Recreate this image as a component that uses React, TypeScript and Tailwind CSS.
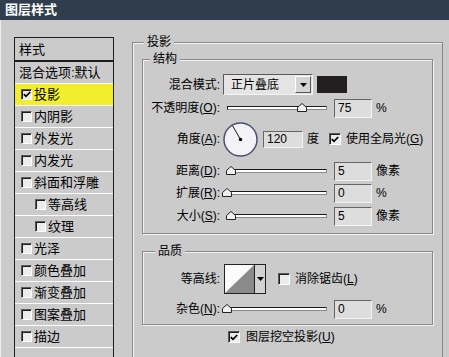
import React from "react";

const styleItems = [
  { label: "投影", checked: true, active: true },
  { label: "内阴影" },
  { label: "外发光" },
  { label: "内发光" },
  { label: "斜面和浮雕" },
  { label: "等高线", indent: true },
  { label: "纹理", indent: true },
  { label: "光泽" },
  { label: "颜色叠加" },
  { label: "渐变叠加" },
  { label: "图案叠加" },
  { label: "描边" },
];

function CheckBox({ checked = false, big = false }: { checked?: boolean; big?: boolean }) {
  return (
    <span
      className={`${big ? "w-[12px] h-[12px]" : "w-[11px] h-[11px]"} shrink-0 flex items-center justify-center border border-t-[#5a5a5a] border-l-[#5a5a5a] border-b-white border-r-white bg-[#ececec] shadow-[inset_1px_1px_0_#1e1e1e]`}
    >
      {checked && (
        <svg width="8" height="7" viewBox="0 0 8 7">
          <path d="M0.8 3.2 L3 5.4 L7.2 1" fill="none" stroke="#000" strokeWidth="1.7" />
        </svg>
      )}
    </span>
  );
}

function Field({ value, wide = false, tall = true }: { value: string; wide?: boolean; tall?: boolean }) {
  return (
    <span
      className={`${wide ? "w-[40px]" : "w-[38px]"} ${tall ? "h-[19px]" : "h-[17px]"} shrink-0 flex items-center pl-[3px] border border-t-[#666] border-l-[#666] border-b-[#f4f4f4] border-r-[#f4f4f4] bg-[#dddddd] text-[12px] leading-none`}
    >
      {value}
    </span>
  );
}

function Slider({ pos }: { pos: number }) {
  return (
    <span className="relative ml-[7px] w-[100px] h-[20px] shrink-0 flex items-center">
      <span className="w-full h-[4px] border border-t-[#1c1c1c] border-l-[#1c1c1c] border-b-[#8a8a8a] border-r-[#8a8a8a] bg-white" />
      {/* slider thumb */}
      <svg className="absolute top-[5px]" style={{ left: pos - 5 }} width="10" height="9" viewBox="0 0 10 9">
        <path d="M0.5 8.5 V4.5 L5 0.5 L9.5 4.5 V8.5 Z" fill="#f0f0f0" stroke="#222" />
      </svg>
    </span>
  );
}

function Label({ children }: { children: React.ReactNode }) {
  return <span className="w-[77px] shrink-0 text-right leading-none whitespace-nowrap">{children}</span>;
}

function SliderRow({
  label,
  pos,
  value,
  unit,
  className,
}: {
  label: React.ReactNode;
  pos: number;
  value: string;
  unit: string;
  className: string;
}) {
  return (
    <div className={`flex items-center h-[20px] ${className}`}>
      <Label>{label}</Label>
      <Slider pos={pos} />
      <span className="ml-[7px]">
        <Field value={value} />
      </span>
      <span className="ml-[4px] leading-none">{unit}</span>
    </div>
  );
}

function Legend({ children, indent }: { children: React.ReactNode; indent: string }) {
  return (
    <div className={`-mt-[9px] ${indent} w-fit px-[3px] h-[17px] leading-[17px] bg-[#cbcbcb]`}>{children}</div>
  );
}

export default function App() {
  return (
    <div className="w-[449px] h-[357px] overflow-hidden bg-[#cbcbcb] flex flex-col text-[12px] text-black font-['Liberation_Sans','Noto_Sans_CJK_SC',sans-serif]">
      {/* Title bar */}
      <div className="h-[20px] shrink-0 bg-[#2f3d4c] text-white font-bold text-[13px] pl-[5px] flex items-center">
        图层样式
      </div>

      <div className="flex flex-1 min-h-0 border-l border-[#efefef]">
        {/* Style list */}
        <div className="ml-[13px] mt-[17px] w-[100px] h-[330px] shrink-0 border border-[#1e1e1e] text-[13px]">
          <div className="h-[24px] border-b-2 border-[#1e1e1e] flex items-center pl-[4px] leading-none">样式</div>
          <div className="h-[22px] border-b border-white flex items-center pl-[4px] leading-none">混合选项:默认</div>
          {styleItems.map((it) => (
            <div
              key={it.label}
              className={`h-[22px] border-b border-white flex items-center leading-none ${it.indent ? "pl-[20px]" : "pl-[6px]"} ${it.active ? "bg-[#f2ee2c]" : ""}`}
            >
              <CheckBox checked={it.checked} />
              <span className="ml-[2px]">{it.label}</span>
            </div>
          ))}
        </div>

        {/* Drop shadow group */}
        <div className="ml-[18px] mt-[22px] w-[311px] h-[330px] shrink-0 border border-[#888] px-[9px] shadow-[inset_1px_1px_0_#f2f2f2]">
          <Legend indent="ml-[2px]">投影</Legend>

          {/* 结构 */}
          <div className="mt-[8px] border border-[#888] pb-[7px] shadow-[inset_1px_1px_0_#f2f2f2,1px_1px_0_#f2f2f2]">
            <Legend indent="ml-[7px]">结构</Legend>

            <div className="mt-[6px] h-[21px] flex items-center">
              <Label>混合模式:</Label>
              <span className="ml-[3px] w-[90px] h-[21px] shrink-0 flex items-center justify-between border border-t-[#5a5a5a] border-l-[#5a5a5a] border-b-[#f4f4f4] border-r-[#f4f4f4] bg-[#e4e4e4]">
                <span className="pl-[7px] leading-none">正片叠底</span>
                <span className="w-[16px] h-[17px] mr-[1px] flex items-center justify-center bg-[#d4d4d4] border border-t-white border-l-white border-b-[#555] border-r-[#555]">
                  <svg width="7" height="4" viewBox="0 0 7 4">
                    <path d="M0 0 H7 L3.5 4 Z" fill="#000" />
                  </svg>
                </span>
              </span>
              <span className="ml-[4px] w-[30px] h-[17px] shrink-0 bg-[#231f20]" />
            </div>

            <SliderRow
              className="mt-[3px]"
              label={
                <>
                  不透明度(<u>O</u>):
                </>
              }
              pos={75}
              value="75"
              unit="%"
            />

            <div className="mt-[3px] h-[36px] flex items-center">
              <Label>
                角度(<u>A</u>):
              </Label>
              {/* angle dial */}
              <svg className="ml-[3px] shrink-0" width="35" height="35" viewBox="0 0 35 35">
                <circle cx="17.5" cy="17.5" r="16.5" fill="#f3f3f7" stroke="#4a5270" strokeWidth="1.5" />
                <line x1="17.5" y1="17.5" x2="9.6" y2="3.8" stroke="#111" strokeWidth="1" />
                <circle cx="17.5" cy="17.5" r="1.7" fill="#000" />
              </svg>
              <span className="ml-[5px]">
                <Field value="120" wide tall={false} />
              </span>
              <span className="ml-[4px] leading-none">度</span>
              <span className="ml-[10px]">
                <CheckBox checked big />
              </span>
              <span className="ml-[5px] leading-none whitespace-nowrap">
                使用全局光(<u>G</u>)
              </span>
            </div>

            <SliderRow
              className="mt-[4px]"
              label={
                <>
                  距离(<u>D</u>):
                </>
              }
              pos={4}
              value="5"
              unit="像素"
            />
            <SliderRow
              className="mt-[2px]"
              label={
                <>
                  扩展(<u>R</u>):
                </>
              }
              pos={0}
              value="0"
              unit="%"
            />
            <SliderRow
              className="mt-[3px]"
              label={
                <>
                  大小(<u>S</u>):
                </>
              }
              pos={4}
              value="5"
              unit="像素"
            />
          </div>

          {/* 品质 */}
          <div className="mt-[17px] border border-[#888] pb-[5px] shadow-[inset_1px_1px_0_#f2f2f2,1px_1px_0_#f2f2f2]">
            <Legend indent="ml-[12px]">品质</Legend>

            <div className="mt-[4px] h-[30px] flex items-center">
              <Label>等高线:</Label>
              <span className="ml-[4px] w-[42px] h-[30px] shrink-0 flex border border-[#222]">
                <svg width="29" height="28" viewBox="0 0 29 28">
                  <rect width="29" height="28" fill="#fbfbfb" />
                  <path d="M0 28 L29 0 L29 28 Z" fill="#8a8a8a" />
                </svg>
                <span className="flex-1 bg-[#d2d2d2] border-l border-[#222] flex items-center justify-center">
                  <svg width="7" height="4" viewBox="0 0 7 4">
                    <path d="M0 0 H7 L3.5 4 Z" fill="#000" />
                  </svg>
                </span>
              </span>
              <span className="ml-[12px]">
                <CheckBox big />
              </span>
              <span className="ml-[5px] leading-none whitespace-nowrap">
                消除锯齿(<u>L</u>)
              </span>
            </div>

            <SliderRow
              className="mt-[5px]"
              label={
                <>
                  杂色(<u>N</u>):
                </>
              }
              pos={0}
              value="0"
              unit="%"
            />
          </div>

          <div className="mt-[4px] h-[16px] flex items-center">
            <span className="ml-[86px]">
              <CheckBox checked big />
            </span>
            <span className="ml-[6px] leading-none whitespace-nowrap">
              图层挖空投影(<u>U</u>)
            </span>
          </div>
        </div>
      </div>
    </div>
  );
}
